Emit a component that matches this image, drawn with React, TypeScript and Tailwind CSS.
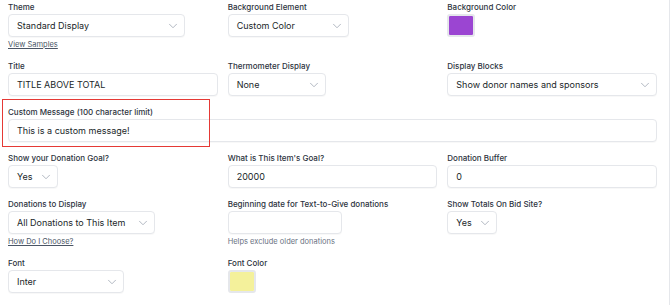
import { ChevronDown } from 'lucide-react';
import type { ReactNode } from 'react';

function Label({ children }: { children: ReactNode }) {
  return <div className="mb-[1px] h-[11px] text-[8px] leading-[11px] font-medium text-[#2d3340]">{children}</div>;
}

function Select({ value, width }: { value: string; width: string }) {
  return (
    <div className={`flex h-[23px] items-center justify-between rounded-[4px] border border-gray-200 bg-white pl-2 pr-[4px] shadow-[0_1px_1px_rgba(0,0,0,0.03)] ${width}`}>
      <span className="text-[9px] text-[#1a1f29]">{value}</span>
      <ChevronDown size={14} strokeWidth={1.3} className="text-gray-400" />
    </div>
  );
}

function Input({ value, width = 'w-full' }: { value?: string; width?: string }) {
  return (
    <div className={`flex h-[23px] items-center rounded-[4px] border border-gray-200 bg-white px-2 shadow-[0_1px_1px_rgba(0,0,0,0.03)] ${width}`}>
      <span className="text-[9px] text-[#1a1f29]">{value}</span>
    </div>
  );
}

function Swatch({ color }: { color: string }) {
  return (
    <div className="h-[23px] w-[28px] rounded-[3px] border-2 border-gray-200">
      <div className={`h-full w-full rounded-[1px] ${color}`} />
    </div>
  );
}

function Hint({ children, link }: { children: ReactNode; link?: boolean }) {
  return (
    <div className={`mt-[2px] h-[11px] text-[7.5px] leading-[11px] ${link ? 'text-gray-600 underline' : 'text-gray-500'}`}>
      {children}
    </div>
  );
}

export default function App() {
  return (
    <div className="h-[305px] w-[670px] border-r border-gray-200 bg-white" style={{ fontFamily: 'Inter, "Noto Sans", sans-serif' }}>
      <div className="flex flex-col gap-[11px] pl-2 pr-[12px] pt-[2px]">
        <div className="grid grid-cols-3 gap-x-[10px]">
          <div>
            <Label>Theme</Label>
            <Select value="Standard Display" width="w-[177px]" />
            <Hint link>View Samples</Hint>
          </div>
          <div>
            <Label>Background Element</Label>
            <Select value="Custom Color" width="w-[121px]" />
          </div>
          <div>
            <Label>Background Color</Label>
            <Swatch color="bg-[#9b45d2]" />
          </div>
        </div>

        <div className="grid grid-cols-3 gap-x-[10px]">
          <div>
            <Label>Title</Label>
            <Input value="TITLE ABOVE TOTAL" />
          </div>
          <div>
            <Label>Thermometer Display</Label>
            <Select value="None" width="w-[98px]" />
          </div>
          <div>
            <Label>Display Blocks</Label>
            <Select value="Show donor names and sponsors" width="w-full" />
          </div>
        </div>

        <div className="relative">
          <div className="pointer-events-none absolute left-[-6px] top-[-8px] h-[48px] w-[208px] border-[1.5px] border-[#e53935]" />
          <Label>Custom Message (100 character limit)</Label>
          <Input value="This is a custom message!" />
        </div>

        <div className="grid grid-cols-3 gap-x-[10px]">
          <div>
            <Label>Show your Donation Goal?</Label>
            <Select value="Yes" width="w-[50px]" />
          </div>
          <div>
            <Label>What is This Item's Goal?</Label>
            <Input value="20000" />
          </div>
          <div>
            <Label>Donation Buffer</Label>
            <Input value="0" />
          </div>
        </div>

        <div className="grid grid-cols-3 gap-x-[10px]">
          <div>
            <Label>Donations to Display</Label>
            <Select value="All Donations to This Item" width="w-[147px]" />
            <Hint link>How Do I Choose?</Hint>
          </div>
          <div>
            <Label>Beginning date for Text-to-Give donations</Label>
            <Input width="w-[114px]" />
            <Hint>Helps exclude older donations</Hint>
          </div>
          <div>
            <Label>Show Totals On Bid Site?</Label>
            <Select value="Yes" width="w-[50px]" />
          </div>
        </div>

        <div className="grid grid-cols-3 gap-x-[10px]">
          <div>
            <Label>Font</Label>
            <Select value="Inter" width="w-[116px]" />
          </div>
          <div>
            <Label>Font Color</Label>
            <Swatch color="bg-[#f4f19b]" />
          </div>
          <div />
        </div>
      </div>
    </div>
  );
}
